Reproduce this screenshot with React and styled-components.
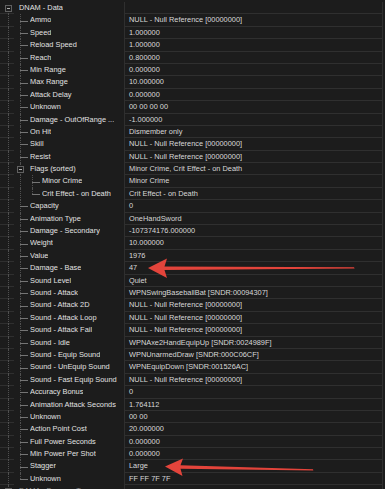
import React from "react";
import styled, { createGlobalStyle, css } from "styled-components";

const ROW_H = 12.4;
const BG = "#1c1c1c";
const GRID = "#2f2f2f";
const TREE = "#757575";
const TREE_V = "#505050";
const NULLREF = "NULL - Null Reference [00000000]";

const GlobalStyle = createGlobalStyle`
  html, body {
    margin: 0;
    background: ${BG};
  }
  body {
    font-family: "Liberation Sans", Arial, sans-serif;
  }
`;

const Frame = styled.div`
  position: relative;
  width: 385px;
  height: 489px;
  overflow: hidden;
  background: ${BG};
  padding-top: 2px;
  box-sizing: border-box;
`;

const Row = styled.div`
  display: flex;
  height: ${ROW_H}px;
`;

const LabelCell = styled.div`
  flex: none;
  width: 125px;
  display: flex;
  align-items: stretch;
  box-sizing: border-box;
  border-right: 1px solid ${GRID};
  overflow: hidden;
`;

const Guide = styled.span`
  position: relative;
  flex: none;
  width: ${(p) => (p.$grid ? 14 : 12)}px;
  ${(p) =>
    p.$grid &&
    css`
      box-shadow: inset 0 -1px 0 ${GRID};
    `}

  &::before {
    content: "";
    position: absolute;
    left: ${(p) => (p.$grid ? 8 : 6)}px;
    top: ${(p) => (p.$kind === "box-first" ? "50%" : "0")};
    bottom: ${(p) => (p.$kind === "elbow" || p.$kind === "box-last" ? "50%" : "0")};
    border-left: 1px dotted ${TREE_V};
    display: ${(p) => (p.$kind === "blank" ? "none" : "block")};
  }

  &::after {
    content: "";
    position: absolute;
    left: 6px;
    width: 8px;
    top: 50%;
    border-top: 1px solid ${TREE};
    display: ${(p) => (p.$kind === "tee" || p.$kind === "elbow" ? "block" : "none")};
  }
`;

const Expander = styled.span`
  position: absolute;
  z-index: 1;
  left: ${(p) => (p.$outer ? 5 : 3)}px;
  top: 50%;
  width: 7px;
  height: 7px;
  margin-top: -3.5px;
  box-sizing: border-box;
  border: 1px solid #616161;
  background: ${BG};

  &::after {
    content: "";
    position: absolute;
    left: 1px;
    right: 1px;
    top: 2px;
    border-top: 1px solid #b0b0b0;
  }
`;

const Label = styled.span`
  margin-left: ${(p) => (p.$root ? 5 : 4)}px;
  font-size: 7.4px;
  line-height: ${ROW_H}px;
  color: ${(p) => (p.$dim ? "#8a8a8a" : "#e2e2e2")};
  white-space: nowrap;
  overflow: hidden;
`;

const ValueCell = styled.div`
  flex: 1;
  min-width: 0;
  margin-right: 2px;
  padding-left: 4px;
  box-sizing: border-box;
  border-bottom: 1px solid ${GRID};
  border-right: 1px solid ${GRID};
  font-size: 7.4px;
  line-height: ${ROW_H - 1}px;
  color: #d8d8d8;
  white-space: nowrap;
  overflow: hidden;
`;

const Overlay = styled.svg`
  position: absolute;
  left: 0;
  top: 0;
  pointer-events: none;
`;

const tree = [
  {
    label: "DNAM - Data",
    children: [
      { label: "Ammo", value: NULLREF },
      { label: "Speed", value: "1.000000" },
      { label: "Reload Speed", value: "1.000000" },
      { label: "Reach", value: "0.800000" },
      { label: "Min Range", value: "0.000000" },
      { label: "Max Range", value: "10.000000" },
      { label: "Attack Delay", value: "0.000000" },
      { label: "Unknown", value: "00 00 00 00" },
      { label: "Damage - OutOfRange ...", value: "-1.000000" },
      { label: "On Hit", value: "Dismember only" },
      { label: "Skill", value: NULLREF },
      { label: "Resist", value: NULLREF },
      {
        label: "Flags (sorted)",
        value: "Minor Crime, Crit Effect - on Death",
        children: [
          { label: "Minor Crime", value: "Minor Crime" },
          { label: "Crit Effect - on Death", value: "Crit Effect - on Death" },
        ],
      },
      { label: "Capacity", value: "0" },
      { label: "Animation Type", value: "OneHandSword" },
      { label: "Damage - Secondary", value: "-107374176.000000" },
      { label: "Weight", value: "10.000000" },
      { label: "Value", value: "1976" },
      { label: "Damage - Base", value: "47" },
      { label: "Sound Level", value: "Quiet" },
      { label: "Sound - Attack", value: "WPNSwingBaseballBat [SNDR:00094307]" },
      { label: "Sound - Attack 2D", value: NULLREF },
      { label: "Sound - Attack Loop", value: NULLREF },
      { label: "Sound - Attack Fail", value: NULLREF },
      { label: "Sound - Idle", value: "WPNAxe2HandEquipUp [SNDR:0024989F]" },
      { label: "Sound - Equip Sound", value: "WPNUnarmedDraw [SNDR:000C06CF]" },
      { label: "Sound - UnEquip Sound", value: "WPNEquipDown [SNDR:001526AC]" },
      { label: "Sound - Fast Equip Sound", value: NULLREF },
      { label: "Accuracy Bonus", value: "0" },
      { label: "Animation Attack Seconds", value: "1.764112" },
      { label: "Unknown", value: "00 00" },
      { label: "Action Point Cost", value: "20.000000" },
      { label: "Full Power Seconds", value: "0.000000" },
      { label: "Min Power Per Shot", value: "0.000000" },
      { label: "Stagger", value: "Large" },
      { label: "Unknown", value: "FF FF 7F 7F" },
    ],
  },
  { label: "DAMA - Damage Types", value: "", dim: true, children: [] },
];

// walk the tree and work out which connector each indent column gets
const flatten = (nodes, parents = [], out = []) => {
  nodes.forEach((node, i) => {
    const last = i === nodes.length - 1;
    const first = i === 0 && parents.length === 0;
    const guides = parents.map((parentLast) => (parentLast ? "blank" : "pipe"));
    let own;
    if (node.children) own = first ? "box-first" : last ? "box-last" : "box";
    else own = last ? "elbow" : "tee";
    out.push({ ...node, guides: [...guides, own], depth: parents.length });
    if (node.children && node.children.length) {
      flatten(node.children, [...parents, last], out);
    }
  });
  return out;
};

const rows = flatten(tree);

const TreeRow = ({ row }) => (
  <Row>
    <LabelCell>
      {row.guides.map((kind, i) => (
        <Guide key={i} $kind={kind} $grid={i === 0}>
          {kind.startsWith("box") && <Expander $outer={i === 0} />}
        </Guide>
      ))}
      <Label $root={row.depth === 0} $dim={row.dim}>
        {row.label}
      </Label>
    </LabelCell>
    <ValueCell>{row.value}</ValueCell>
  </Row>
);

const Arrows = () => (
  <Overlay width="385" height="489" viewBox="0 0 385 489">
    <polygon
      fill="#e3443b"
      points="148,268 167,258.5 164.5,266.4 354,267.2 354.6,268.6 164.5,270 167,278"
    />
    <polygon
      fill="#e3443b"
      points="165,466.5 183,458.5 180.5,465.2 313,469.2 313.3,470.6 180.5,468.8 182.5,476"
    />
  </Overlay>
);

export default function App() {
  return (
    <>
      <GlobalStyle />
      <Frame>
        {rows.map((row, i) => (
          <TreeRow key={i} row={row} />
        ))}
        <Arrows />
      </Frame>
    </>
  );
}
